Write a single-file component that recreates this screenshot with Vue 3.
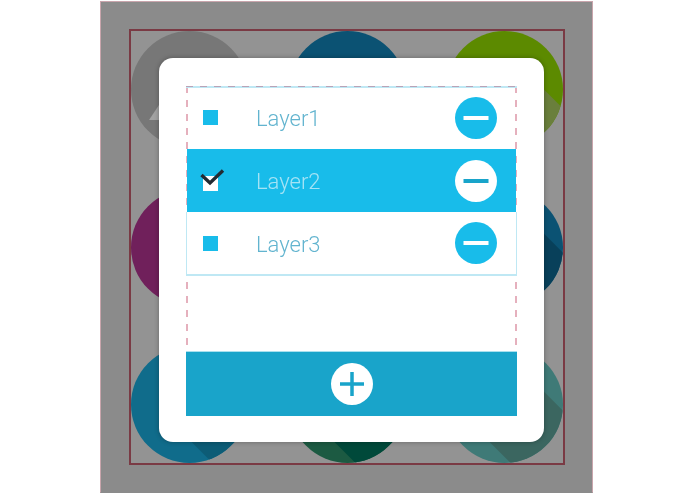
<script setup>
const circles = [
  { id: 1, cls: 'gray' },
  { id: 2, cls: 'blue' },
  { id: 3, cls: 'green' },
  { id: 4, cls: 'magenta' },
  { id: 5, cls: 'navy' },
  { id: 6, cls: 'navy2' },
  { id: 7, cls: 'teal' },
  { id: 8, cls: 'forest' },
  { id: 9, cls: 'sea' }
]

const layers = [
  { id: 1, name: 'Layer1', active: false },
  { id: 2, name: 'Layer2', active: true },
  { id: 3, name: 'Layer3', active: false }
]
</script>

<template>
  <div class="page">
    <div class="stage">
      <div class="frame">
        <div v-for="c in circles" :key="c.id" class="circle" :class="c.cls">
          <svg v-if="c.cls === 'gray'" class="triangle" width="34" height="26" viewBox="0 0 34 26">
            <path d="M1 25 L17 1 L33 25 Z" fill="#a2a2a2" />
          </svg>
        </div>
      </div>

      <div class="card">
        <div class="panel">
          <div class="list">
            <div v-for="layer in layers" :key="layer.id" class="row" :class="{ active: layer.active }">
              <div class="check">
                <svg v-if="layer.active" class="tick" width="26" height="22" viewBox="0 0 26 22">
                  <path d="M1.5 9 L10 17 L23 4.5" fill="none" stroke="#222b33" stroke-width="3.4" />
                </svg>
              </div>
              <span class="name">{{ layer.name }}</span>
              <button class="round minus">
                <svg width="42" height="42" viewBox="0 0 42 42">
                  <rect x="8.5" y="19" width="25" height="4" />
                </svg>
              </button>
            </div>
          </div>
          <div class="spacer"></div>
          <div class="add">
            <button class="round plus">
              <svg width="42" height="42" viewBox="0 0 42 42">
                <path d="M9 19.25 H19.25 V9 H22.75 V19.25 H33 V22.75 H22.75 V33 H19.25 V22.75 H9 Z" />
              </svg>
            </button>
          </div>
        </div>
      </div>
    </div>
  </div>
</template>

<style>
body {
  background: #fff;
}
</style>

<style scoped>
.page {
  display: flex;
  width: 695px;
  height: 494px;
  padding: 1px 0 0 100px;
  box-sizing: border-box;
  overflow: hidden;
  font-family: Roboto, "Liberation Sans", sans-serif;
}

.stage {
  position: relative;
  width: 493px;
  height: 492px;
  box-sizing: border-box;
  padding: 27px 27px 27px 28px;
  background: #8b8b8b;
  border: 1px solid #c9a5ac;
  border-bottom-color: #8b8b8b;
  filter: blur(0.4px);
}

.frame {
  display: grid;
  grid-template-columns: repeat(3, 117px);
  grid-template-rows: repeat(3, 117px);
  justify-content: space-between;
  align-content: space-between;
  height: 100%;
  background: #939393;
  border: 2px solid #7a3a44;
  box-sizing: border-box;
}

.circle {
  position: relative;
  width: 117px;
  height: 117px;
  border-radius: 50%;
  overflow: hidden;
}

/* long shadow of the icon, runs from the centre to the lower right */
.circle::after {
  content: '';
  position: absolute;
  left: 50%;
  top: 50%;
  width: 90px;
  height: var(--band);
  margin-top: calc(var(--band) / -2);
  background: var(--shade);
  transform-origin: 0 50%;
  transform: rotate(45deg);
}

.triangle {
  position: absolute;
  left: 17px;
  top: 64px;
}

.gray { background: #777; --band: 0px; --shade: #777; }
.blue { background: #0b5273; --band: 0px; --shade: #0b5273; }
.green { background: #5c8a00; --band: 56px; --shade: #6a7f3c; }
.magenta { background: #70205b; --band: 0px; --shade: #70205b; }
.navy { background: #0b5273; --band: 0px; --shade: #0b5273; }
.navy2 { background: #0b5273; --band: 74px; --shade: #08405a; }
.teal { background: #106c8b; --band: 50px; --shade: #0d5c76; }
.forest { background: #1c5a42; --band: 70px; --shade: #00493a; }
.sea { background: #3f7a77; --band: 74px; --shade: #3b6660; }

.card {
  position: absolute;
  left: 58px;
  top: 56px;
  width: 385px;
  height: 384px;
  box-sizing: border-box;
  padding: 28px 27px 26px;
  background: #fff;
  border-radius: 14px;
  box-shadow: 0 0 5px rgba(0, 0, 0, 0.3);
}

/* long dashes, css dashed borders come out too short here */
.panel {
  display: flex;
  flex-direction: column;
  height: 100%;
  background:
    linear-gradient(to right, #b9a3b8 0 7px, transparent 7px 14px) top left / 14px 1px repeat-x,
    linear-gradient(#bfe8f4, #bfe8f4) top left / 100% 2px no-repeat,
    linear-gradient(#e5b0bd 0 7px, transparent 7px 14px) top left / 2px 14px repeat-y,
    linear-gradient(#e5b0bd 0 7px, transparent 7px 14px) top right / 2px 14px repeat-y;
}

.list {
  margin: 0 1px;
}

.row {
  display: flex;
  align-items: center;
  height: 63px;
  padding: 0 19px 0 16px;
  color: #62b4cf;
}

.row.active {
  background: #18bcea;
  color: #a5e3f5;
}

.row:last-child {
  height: 62px;
  margin: 0 -1px;
  background: #fff;
  border-left: 1px solid #bfe8f4;
  border-right: 1px solid #bfe8f4;
  border-bottom: 2px solid #bfe8f4;
}

.check {
  position: relative;
  width: 15px;
  height: 15px;
  flex: none;
  background: #18bcea;
}

.active .check {
  background: #fff;
  margin-top: 5px;
}

.tick {
  position: absolute;
  left: -3px;
  top: -10px;
}

.name {
  flex: 1;
  margin-left: 38px;
  padding-top: 2px;
  font-size: 22px;
  font-weight: 300;
}

.round {
  display: flex;
  width: 42px;
  height: 42px;
  flex: none;
  padding: 0;
  border: none;
  border-radius: 50%;
}

.minus {
  background: #18bcea;
  fill: #fff;
}

.active .minus {
  background: #fff;
  fill: #18a4ca;
}

.spacer {
  flex: 1;
}

.add {
  display: flex;
  align-items: center;
  justify-content: center;
  height: 65px;
  background: #19a4ca;
  border-top: 1px solid #a9e0ee;
  box-sizing: border-box;
}

.plus {
  background: #fff;
  fill: #18a4ca;
}
</style>
